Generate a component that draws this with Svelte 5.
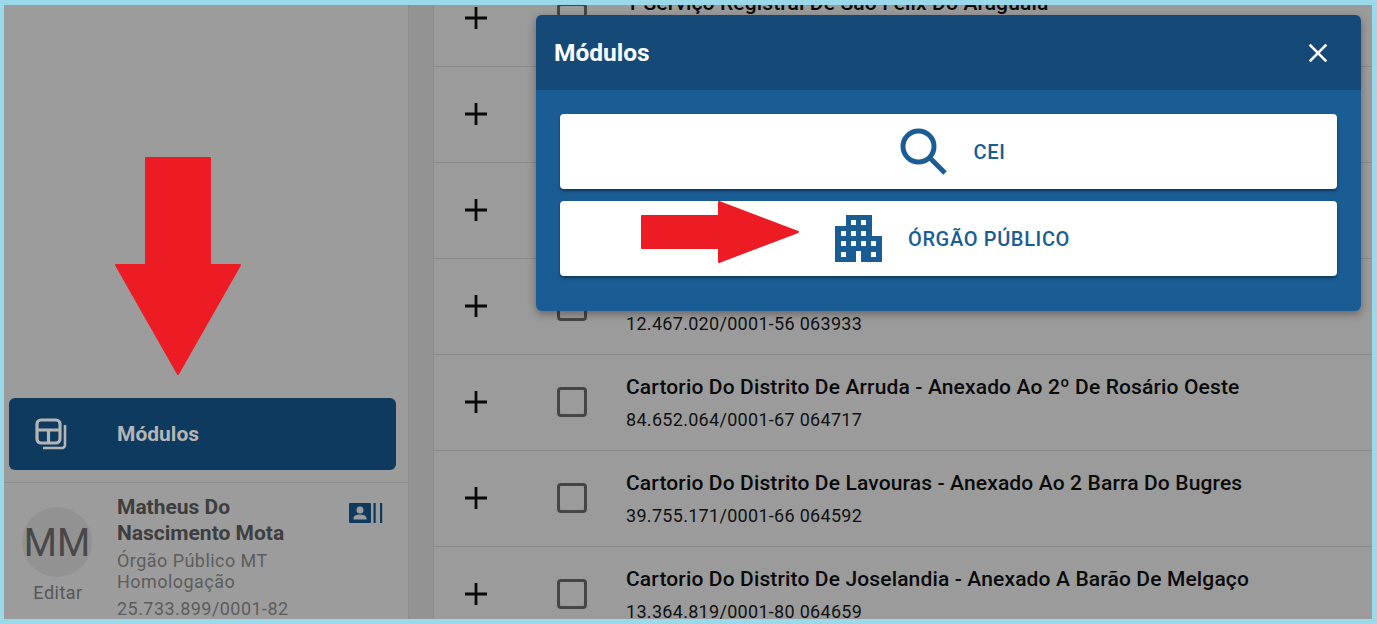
<script>
  const rows = [
    { t: '1 Serviço Registral De São Félix Do Araguaia', s: '12.310.445/0001-20 063120' },
    { t: '2º Serviço Registral De Alta Floresta', s: '10.482.310/0001-44 063210' },
    { t: 'Cartorio Do 1º Ofício De Alto Garças', s: '11.203.114/0001-09 063455' },
    { t: 'Cartorio Do 2º Ofício De Alto Araguaia', s: '12.467.020/0001-56 063933' },
    { t: 'Cartorio Do Distrito De Arruda - Anexado Ao 2º De Rosário Oeste', s: '84.652.064/0001-67 064717' },
    { t: 'Cartorio Do Distrito De Lavouras - Anexado Ao 2 Barra Do Bugres', s: '39.755.171/0001-66 064592' },
    { t: 'Cartorio Do Distrito De Joselandia - Anexado A Barão De Melgaço', s: '13.364.819/0001-80 064659' }
  ];
</script>

<div class="frame">
  <aside class="sidebar">
    <button class="nav">
      <svg class="nav-icon" viewBox="0 0 32 32" fill="none" stroke="currentColor" stroke-width="3.200">
        <rect x="2" y="2" width="23" height="23" rx="4"/>
        <path d="M2 12h23M13.500 12v13"/>
        <path d="M30 7v20a3 3 0 0 1-3 3H8" stroke-width="2.600"/>
      </svg>
      <span>Módulos</span>
    </button>
    <div class="user">
      <div class="who">
        <div class="avatar">MM</div>
        <div class="edit">Editar</div>
      </div>
      <div class="info">
        <div class="name">Matheus Do Nascimento Mota</div>
        <div class="org">Órgão Público MT Homologação</div>
        <div class="doc">25.733.899/0001-82</div>
      </div>
      <svg class="card-icon" viewBox="0 0 34 20">
        <path fill-rule="evenodd" d="M1 0h20a1 1 0 0 1 1 1v18a1 1 0 0 1-1 1H1a1 1 0 0 1-1-1V1a1 1 0 0 1 1-1zM11 3.500a3.500 3.500 0 1 0 0 7 3.500 3.500 0 0 0 0-7zM4.500 16.500h13v-1.500c0-2.500-4-3.500-6.500-3.500s-6.500 1-6.500 3.500z"/>
        <path d="M24.500 0h2.200v20h-2.200zM31 0h2.200v20H31z"/>
      </svg>
    </div>
  </aside>
  <div class="gutter"></div>
  <main class="list">
    {#each rows as r}
      <div class="row">
        <svg class="plus" viewBox="0 0 22 22"><path d="M11 0v22M0 11h22" stroke="#0a0a0a" stroke-width="2.800"/></svg>
        <span class="check"></span>
        <div class="text">
          <div class="title">{r.t}</div>
          <div class="sub">{r.s}</div>
        </div>
      </div>
    {/each}
  </main>

  <section class="modal">
    <header class="modal-head">
      <h2>Módulos</h2>
      <svg class="close" viewBox="0 0 18 18"><path d="M1.500 1.500l15 15M16.500 1.500l-15 15" stroke="#fff" stroke-width="2.400"/></svg>
    </header>
    <div class="modal-body">
      <button class="mod">
        <svg class="search" viewBox="0 0 48 48" fill="none" stroke="#1a5c94">
          <circle cx="18.500" cy="18.500" r="15.500" stroke-width="5"/>
          <path d="M30 30l15 15" stroke-width="5"/>
        </svg>
        <span>CEI</span>
      </button>
      <button class="mod">
        <svg class="building" viewBox="0 0 47 47">
          <path fill="#1a5c94" fill-rule="evenodd" d="M11 0h26v21h10v26H26V36h-5v11H0V11h11zM16 5v5h5V5zM26 5v5h5V5zM6 16v5h5v-5zM16 16v5h5v-5zM26 16v5h5v-5zM6 26v5h5v-5zM16 26v5h5v-5zM26 26v5h5v-5zM36 26v5h5v-5zM6 37v5h5v-5zM36 37v5h5v-5z"/>
        </svg>
        <span>ÓRGÃO PÚBLICO</span>
      </button>
    </div>
  </section>

  <svg class="arrow-down" viewBox="-2 -2 130 223"><path fill="#ed1c24" stroke="#ed1c24" stroke-width="2" stroke-linejoin="round" d="M31 1h64v107h30L63 217 1 108h30z"/></svg>
  <svg class="arrow-right" viewBox="-2 -2 162 66"><path fill="#ed1c24" stroke="#ed1c24" stroke-width="2" stroke-linejoin="round" d="M1 15h77V1l79 30-79 30V47H1z"/></svg>
</div>

<style>
  :global(body) { margin: 0; }
  .frame {
    position: relative;
    box-sizing: border-box;
    width: 1377px;
    height: 624px;
    border: 5px solid #99d9ea;
    border-left-width: 4px;
    display: flex;
    overflow: hidden;
    background: #9b9b9b;
    font-family: Roboto, "Liberation Sans", sans-serif;
  }
  .sidebar {
    box-sizing: border-box;
    width: 405px;
    flex: none;
    padding-top: 393px;
    background: #9c9c9c;
    border-right: 1px solid #8f8f8f;
  }
  .nav {
    box-sizing: border-box;
    display: flex;
    align-items: center;
    width: 387px;
    height: 72px;
    margin-left: 5px;
    padding: 0 0 0 26px;
    border: 0;
    border-radius: 6px;
    background: #0f3a5f;
    color: #b5b5b5;
    font: 700 21px Roboto, sans-serif;
  }
  .nav-icon { width: 32px; height: 32px; margin-right: 50px; }
  .user {
    display: flex;
    align-items: flex-start;
    margin-top: 12px;
    padding: 11px 0 0 18px;
    height: 140px;
    border-top: 1px solid #8f8f8f;
    position: relative;
  }
  .who { width: 72px; flex: none; text-align: center; padding-top: 13px; }
  .avatar {
    width: 70px;
    height: 70px;
    border-radius: 50%;
    background: #929292;
    color: #484848;
    font-size: 38px;
    line-height: 72px;
    text-align: center;
  }
  .edit { margin-top: 5px; font-size: 18px; letter-spacing: .5px; color: #565656; }
  .info { width: 220px; margin-left: 23px; color: #5c5c5c; }
  .name { width: 190px; font-size: 21px; font-weight: 700; line-height: 26px; color: #3e3e3e; }
  .org { width: 170px; font-size: 18px; line-height: 21px; letter-spacing: .45px; margin-top: 4px; }
  .doc { font-size: 18px; line-height: 21px; letter-spacing: .45px; margin-top: 6px; }
  .card-icon { width: 34px; height: 20px; fill: #0f3a5f; margin: 9px 0 0 12px; flex: none; }
  .gutter { width: 24px; flex: none; background: #939393; border-right: 1px solid #8c8c8c; }
  .list { flex: 1; margin-top: -34px; min-width: 0; }
  .row {
    box-sizing: border-box;
    height: 96px;
    display: flex;
    align-items: center;
    border-bottom: 1px solid #8a8a8a;
  }
  .plus { width: 22px; height: 22px; margin: 0 0 2px 31px; flex: none; }
  .check {
    box-sizing: border-box;
    width: 30px;
    height: 30px;
    margin: 0 0 2px 70px;
    border: 3px solid #454545;
    border-radius: 4px;
    flex: none;
  }
  .text { margin-left: 39px; }
  .title { font-size: 21px; font-weight: 500; line-height: 26px; color: #0a0a0a; letter-spacing: .14px; position: relative; top: -1px; }
  .sub { font-size: 18px; line-height: 22px; margin-top: 8px; color: #111; letter-spacing: .3px; }
  .modal {
    position: absolute;
    left: 532px;
    top: 10px;
    width: 825px;
    height: 296px;
    border-radius: 6px;
    overflow: hidden;
    background: #1a5c94;
    box-shadow: 0 3px 8px rgba(0,0,0,.35);
  }
  .modal-head {
    height: 75px;
    background: #154a78;
    display: flex;
    align-items: center;
    justify-content: space-between;
    padding: 0 34px 0 18px;
  }
  h2 { margin: 0; font-size: 24.500px; font-weight: 700; color: #fff; }
  .close { width: 20px; height: 20px; margin-right: -1px; }
  .modal-body { padding: 24px; display: flex; flex-direction: column; gap: 12px; }
  .mod {
    height: 75px;
    display: flex;
    align-items: center;
    justify-content: center;
    gap: 26px;
    padding: 0 0 0 8px;
    border: 0;
    border-radius: 4px;
    background: #fff;
    color: #1a5c94;
    font: 500 20px Roboto, sans-serif;
    letter-spacing: .65px;
    box-shadow: 0 2px 3px rgba(0,0,0,.4);
  }
  .search { width: 48px; height: 48px; }
  .building { width: 47px; height: 47px; }
  .arrow-down { position: absolute; left: 109px; top: 150px; width: 130px; height: 223px; }
  .arrow-right { position: absolute; left: 635px; top: 194px; width: 162px; height: 66px; }
</style>
